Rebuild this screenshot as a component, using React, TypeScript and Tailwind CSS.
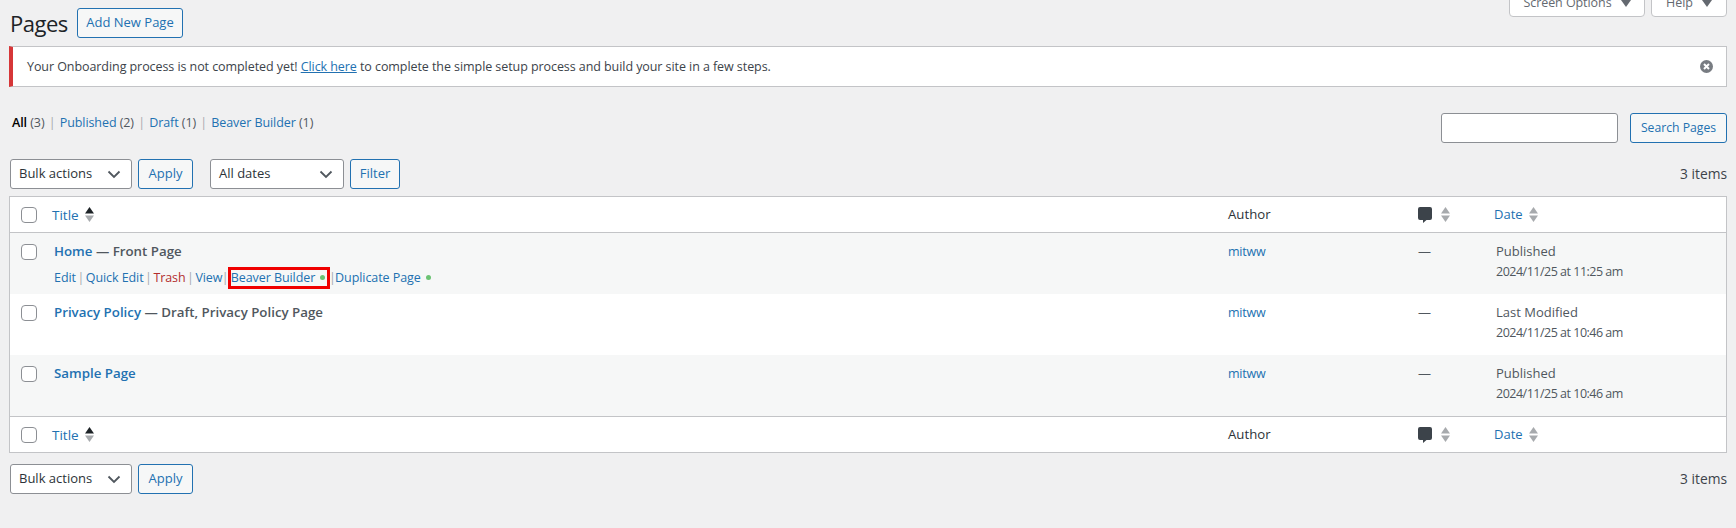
import React from 'react';

const font = "font-['Open_Sans',sans-serif]";
const btn = 'h-[30px] rounded-[3px] border border-[#2271b1] bg-[#f6f7f7] text-[13px] text-[#2271b1] flex items-center justify-center';
const sel = 'h-[30px] rounded-[3px] border border-[#8c8f94] bg-white text-[13px] text-[#2c3338] flex items-center justify-between pl-2 pr-[9px]';
const small = 'text-[12.5px] tracking-[-0.07px]';

function Chevron() {
  return (
    <svg width="16" height="16" viewBox="0 0 16 16" fill="none" stroke="#50575e" strokeWidth="1.8">
      <path d="M2.5 5.5 8 11l5.5-5.5" />
    </svg>
  );
}

function Sort({ active = false }: { active?: boolean }) {
  return (
    <svg width="9" height="15" viewBox="0 0 9 15" className="shrink-0">
      <path d="M4.5 0 9 6.5H0z" fill={active ? '#1d2327' : '#a7aaad'} />
      <path d="M0 8.5h9L4.5 15z" fill="#a7aaad" />
    </svg>
  );
}

function CommentIcon() {
  return (
    <svg width="14" height="16" viewBox="0 0 14 16" className="shrink-0">
      <path d="M2 0h10a2 2 0 0 1 2 2v9a2 2 0 0 1-2 2H8.5l-3.5 3v-3H2a2 2 0 0 1-2-2V2a2 2 0 0 1 2-2z" fill="#3c434a" />
    </svg>
  );
}

function Dismiss() {
  return (
    <svg width="13" height="13" viewBox="0 0 13 13">
      <circle cx="6.5" cy="6.5" r="6.5" fill="#787c82" />
      <path d="M4 4l5 5M9 4l-5 5" stroke="#fff" strokeWidth="2" />
    </svg>
  );
}

function Check() {
  return <span className="block w-4 h-4 rounded-[4px] border border-[#8c8f94] bg-white shrink-0" />;
}

function Tab({ label, width }: { label: string; width: string }) {
  return (
    <div className={`${width} ${small} h-[28px] shrink-0 rounded-b-[4px] border border-[#c3c4c7] bg-white flex items-center justify-center gap-[9px] text-[#646970]`}>
      {label}
      <svg width="10" height="7" viewBox="0 0 10 7"><path d="M0 0h10L5 7z" fill="#646970" /></svg>
    </div>
  );
}

function Sep({ tight = false }: { tight?: boolean }) {
  return <span className={`text-[#a7aaad] ${tight ? 'mx-[-0.75px]' : 'px-[1.5px]'}`}>|</span>;
}

function FilterSep() {
  return <span className="text-[#a7aaad] px-px">|</span>;
}

function HeadRow({ bottom = false }: { bottom?: boolean }) {
  return (
    <div className={`flex h-[36px] items-center bg-white border-[#c3c4c7] ${bottom ? 'border-t' : 'border-b'}`}>
      <div className="w-[42px] pl-[11px] shrink-0"><Check /></div>
      <div className="flex-1 flex items-center gap-[6px]">
        <span className="text-[#2271b1] text-[13.5px] pt-px">Title</span>
        <Sort active />
      </div>
      <div className="w-[190px] text-[#2c3338] text-[13.2px] pt-px">Author</div>
      <div className="w-[76px] flex items-center gap-[9px]">
        <CommentIcon />
        <Sort />
      </div>
      <div className="w-[232px] flex items-center gap-[6px]">
        <span className="text-[#2271b1] pt-px">Date</span>
        <Sort />
      </div>
    </div>
  );
}

interface PageRow {
  title: string;
  state?: string;
  status: string;
  date: string;
  actions?: boolean;
}

const rows: PageRow[] = [
  { title: 'Home', state: ' — Front Page', status: 'Published', date: '2024/11/25 at 11:25 am', actions: true },
  { title: 'Privacy Policy', state: ' — Draft, Privacy Policy Page', status: 'Last Modified', date: '2024/11/25 at 10:46 am' },
  { title: 'Sample Page', status: 'Published', date: '2024/11/25 at 10:46 am' },
];

function Row({ row, alt }: { row: PageRow; alt: boolean }) {
  return (
    <div className={`flex h-[61px] ${alt ? 'bg-[#f6f7f7]' : 'bg-white'}`}>
      <div className="w-[42px] pl-[11px] pt-[11px] shrink-0"><Check /></div>
      <div className="flex-1 pl-[2px] pt-[8px]">
        <div className="h-5 leading-5 font-semibold text-[13.3px]">
          <span className="text-[#2271b1]">{row.title}</span>
          {row.state && <span className="text-[#50575e]">{row.state}</span>}
        </div>
        {row.actions && (
          <div className={`${small} flex items-center h-[22px] mt-[6px] text-[#2271b1]`}>
            <span>Edit</span>
            <Sep />
            <span>Quick Edit</span>
            <Sep />
            <span className="text-[#b32d2e]">Trash</span>
            <Sep />
            <span>View</span>
            <Sep tight />
            <span className="w-[102px] h-[22px] shrink-0 border-[3px] border-[#f00000] flex items-center gap-[5px]">
              Beaver Builder
              <i className="block w-[5px] h-[5px] rounded-full bg-[#6bc373] -mt-[2px]" />
            </span>
            <Sep tight />
            <span>Duplicate Page</span>
            <i className="block w-[5px] h-[5px] rounded-full bg-[#6bc373] ml-[5px] -mt-[2px]" />
          </div>
        )}
      </div>
      <div className="w-[190px] pt-[9px] leading-5 text-[#2271b1] text-[12.5px] tracking-[-0.2px]">mitww</div>
      <div className="w-[77px] pt-[8px] leading-5 text-[#50575e]">—</div>
      <div className="w-[231px] pl-[1px] pt-[8px] text-[#50575e]">
        <div className="leading-5">{row.status}</div>
        <div className="mt-px leading-5 text-[12.5px] tracking-[-0.5px]">{row.date}</div>
      </div>
    </div>
  );
}

export default function App() {
  return (
    <div className={`${font} w-[1736px] h-[528px] overflow-hidden bg-[#f0f0f1] px-[9px] text-[13px] text-[#3c434a]`}>
      <div className="flex justify-between">
        <div className="flex items-center gap-[10px] pt-2 pl-px">
          <h1 className="w-[57px] text-[22px] tracking-[-0.5px] leading-[30px] text-[#1d2327]">Pages</h1>
          <div className={`${btn} w-[106px]`}>Add New Page</div>
        </div>
        <div className="flex items-end gap-[6px] h-[17px]">
          <Tab label="Screen Options" width="w-[136px]" />
          <Tab label="Help" width="w-[76px]" />
        </div>
      </div>

      <div className="mt-[8px] h-[41px] bg-white border border-[#c3c4c7] border-l-4 border-l-[#d63638] flex items-center justify-between pl-[14px] pr-[13px]">
        <p className={`${small} pt-px`}>
          Your Onboarding process is not completed yet! <span className="text-[#2271b1] underline">Click here</span> to complete the simple setup process and build your site in a few steps.
        </p>
        <Dismiss />
      </div>

      <div className="mt-[26px] flex justify-between h-[30px] pl-[3px]">
        <div className={`${small} leading-5 text-[#50575e]`}>
          <span className="text-black font-semibold">All</span> (3) <FilterSep /> <span className="text-[#2271b1]">Published</span> (2) <FilterSep /> <span className="text-[#2271b1]">Draft</span> (1) <FilterSep /> <span className="text-[#2271b1]">Beaver Builder</span> (1)
        </div>
        <div className="flex gap-3">
          <div className="w-[177px] h-[30px] rounded-[3px] border border-[#8c8f94] bg-white" />
          <div className={`${btn} w-[97px]`}><span className="text-[12.2px]">Search Pages</span></div>
        </div>
      </div>

      <div className="mt-4 flex items-center h-[30px] pl-px">
        <div className={`${sel} w-[122px]`}>Bulk actions<Chevron /></div>
        <div className={`${btn} w-[55px] ml-[6px]`}>Apply</div>
        <div className={`${sel} w-[134px] ml-[17px]`}>All dates<Chevron /></div>
        <div className={`${btn} w-[50px] ml-[6px]`}>Filter</div>
        <span className="ml-auto text-[13.8px]">3 items</span>
      </div>

      <div className="mt-[7px] border border-[#c3c4c7]">
        <HeadRow />
        {rows.map((row, i) => <Row key={row.title} row={row} alt={i % 2 === 0} />)}
        <HeadRow bottom />
      </div>

      <div className="mt-[11px] flex items-center h-[30px] pl-px">
        <div className={`${sel} w-[122px]`}>Bulk actions<Chevron /></div>
        <div className={`${btn} w-[55px] ml-[6px]`}>Apply</div>
        <span className="ml-auto text-[13.8px]">3 items</span>
      </div>
    </div>
  );
}
